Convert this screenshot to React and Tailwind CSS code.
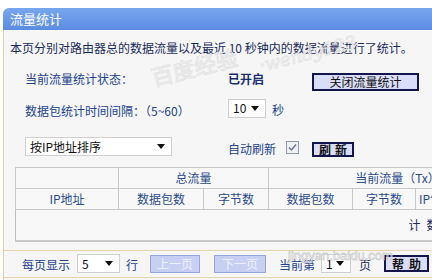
import React from "react";

const F = { fontFamily: '"Noto Sans CJK SC", "Liberation Sans", sans-serif' };

function Arrow() {
  return (
    <svg width="8" height="5" viewBox="0 0 8 5" className="block">
      <path d="M0 0 L8 0 L4 5 Z" fill="#111" />
    </svg>
  );
}

function Select({ w, text }) {
  return (
    <div
      className={`flex items-center justify-between bg-white border border-[#cfcfcf] h-[19px] pl-[4px] pr-[6px] ${w}`}
    >
      <span className="text-[12px] leading-[14px] text-[#111]">{text}</span>
      <Arrow />
    </div>
  );
}

export default function App() {
  return (
    <div className="relative w-[432px] h-[280px] overflow-hidden bg-white pt-[8px]" style={F}>
      {/* title bar */}
      <div className="ml-[3px] h-[22px] rounded-tl-[6px] bg-gradient-to-b from-[#78a6ee] to-[#5c8ce2] flex items-center pl-[7px]">
        <span className="text-white text-[13px] leading-[14px]">流量统计</span>
      </div>
      {/* content */}
      <div className="ml-[3px] h-[250px] border-l border-[#e2d2a8] bg-[#f6f6f6] pt-[10px]">
        <div className="pl-[6px] text-[12px] leading-[16px] text-[#1b2a5c] whitespace-nowrap">
          本页分别对路由器总的数据流量以及最近 10 秒钟内的数据流量进行了统计。
        </div>

        {/* row 1 */}
        <div className="flex items-start mt-[17px] pl-[21px]">
          <div className="w-[203px] text-[12px] leading-[14px] text-[#22428e] mt-[-1px]">当前流量统计状态：</div>
          <div className="w-[84px] text-[12px] leading-[14px] font-bold text-[#1a2f6e] mt-[-1px]">已开启</div>
          <div className="w-[107px] h-[18px] border-2 border-[#15154e] bg-[#d9ddf8] flex items-center justify-center text-[12px] leading-[14px] text-[#111]">
            关闭流量统计
          </div>
        </div>

        {/* row 2 */}
        <div className="flex items-center mt-[7px] pl-[21px] h-[20px]">
          <div className="w-[203px] text-[12px] leading-[14px] text-[#22428e] mt-[5px]">数据包统计时间间隔：（5~60）</div>
          <Select w="w-[38px]" text="10" />
          <div className="ml-[6px] text-[12px] leading-[14px] text-[#22428e] mt-[3px]">秒</div>
        </div>

        {/* row 3 */}
        <div className="flex items-center mt-[19px] pl-[21px] h-[19px]">
          <div className="w-[203px]">
            <Select w="w-[147px]" text="按IP地址排序" />
          </div>
          <div className="w-[58px] text-[12px] leading-[14px] text-[#22428e] mt-[4px]">自动刷新</div>
          <div className="w-[26px] mt-[2px]">
            <div className="w-[13px] h-[13px] border border-[#8e9aa8] bg-[#eef0f2] flex items-center justify-center">
              <svg width="9" height="9" viewBox="0 0 9 9">
                <path d="M1 4.5 L3.5 7 L8 1.5" stroke="#6a7a8a" strokeWidth="1.5" fill="none" />
              </svg>
            </div>
          </div>
          <div className="w-[42px] h-[15px] mt-[6px] border-2 border-[#15154e] bg-[#d9ddf8] flex items-center justify-center text-[12px] leading-[14px] text-[#111] font-bold tracking-[4px] pl-[4px]">
            刷新
          </div>
        </div>

        {/* table */}
        <div className="mt-[11px] ml-[11px] w-[600px]">
          <table className="border-collapse border border-[#bdbdbd] bg-[#f8f8f8] text-[12px] leading-[14px] text-[#2a4a8e] table-fixed">
            <colgroup>
              <col className="w-[103px]" />
              <col className="w-[85px]" />
              <col className="w-[65px]" />
              <col className="w-[84px]" />
              <col className="w-[63px]" />
              <col className="w-[60px]" />
              <col className="w-[51px]" />
            </colgroup>
            <tbody>
              <tr className="h-[21px]">
                <td className="border border-[#c8c8c8]"></td>
                <td colSpan={2} className="border border-[#c8c8c8] text-center">总流量</td>
                <td colSpan={4} className="border border-[#c8c8c8] text-center whitespace-nowrap">当前流量（Tx）</td>
              </tr>
              <tr className="h-[21px]">
                <td className="border border-[#c8c8c8] text-center">IP地址</td>
                <td className="border border-[#c8c8c8] text-center">数据包数</td>
                <td className="border border-[#c8c8c8] text-center">字节数</td>
                <td className="border border-[#c8c8c8] text-center">数据包数</td>
                <td className="border border-[#c8c8c8] text-center">字节数</td>
                <td className="border border-[#c8c8c8] text-left pl-[3px] whitespace-nowrap">IP包数</td>
                <td className="border border-[#c8c8c8]"></td>
              </tr>
              <tr className="h-[31px]">
                <td colSpan={5} className="border-b-2 border-[#c8c8c8]"></td>
                <td colSpan={2} className="border-b-2 border-[#c8c8c8] text-[#1b2a5c] align-middle whitespace-nowrap">
                  <span className="ml-[-7px] tracking-[6px]">计数</span>
                </td>
              </tr>
            </tbody>
          </table>
        </div>

        {/* footer */}
        <div className="mt-[8px] border-t border-b border-[#e6d6ae] h-[28px] flex items-center pl-[18px] text-[12px] leading-[14px] text-[#22428e]">
          <span className="w-[55px] mt-[2px]">每页显示</span>
          <Select w="w-[43px]" text="5" />
          <span className="ml-[6px] w-[24px] mt-[2px]">行</span>
          <div className="w-[50px] h-[18px] border border-[#97a6dc] bg-[#c7cff2] flex items-center justify-center text-[#eef1ff]">上一页</div>
          <div className="ml-[14px] w-[52px] h-[18px] border border-[#97a6dc] bg-[#c7cff2] flex items-center justify-center text-[#eef1ff]">下一页</div>
          <span className="ml-[13px] w-[42px] mt-[2px]">当前第</span>
          <Select w="w-[30px]" text="1" />
          <span className="ml-[8px] w-[25px] text-[#1b2a5c] mt-[2px]">页</span>
          <div className="w-[45px] h-[17px] border-2 border-[#15154e] bg-[#d9ddf8] flex items-center justify-center text-[#111] font-bold tracking-[5px] pl-[5px]">帮助</div>
        </div>
      </div>

      {/* watermark overlays */}
      <div className="absolute left-[150px] top-[54px] -rotate-[14deg] text-[22px] leading-[24px] text-transparent pointer-events-none" style={{ WebkitTextStroke: "1px #e4e4e4", fontFamily: '"Noto Sans CJK SC", sans-serif' }}>
        百度经验
      </div>
      <div className="absolute left-[258px] top-[40px] -rotate-[14deg] text-[18px] italic text-transparent pointer-events-none" style={{ WebkitTextStroke: "1px #e6e6e6", fontFamily: '"DejaVu Serif", serif' }}>
        ·wendy123
      </div>
      <div className="absolute left-[288px] top-[249px] text-[13px] leading-[14px] text-transparent pointer-events-none" style={{ WebkitTextStroke: "0.8px #d2d2d2", fontFamily: '"Liberation Sans", sans-serif' }}>
        jingyan.baidu.com
      </div>
    </div>
  );
}
